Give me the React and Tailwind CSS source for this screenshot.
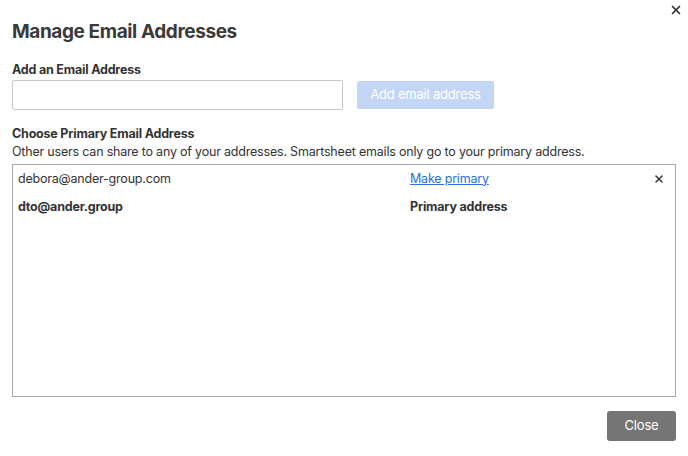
import { X } from "lucide-react";

export default function App() {
  return (
    <div className="relative w-[688px] h-[456px] bg-white px-3 pt-[20px] text-[#333] font-['Inter',sans-serif] tracking-[-0.2px]">
      {/* Close icon */}
      <button className="absolute top-[3px] right-[5px] text-[#333]">
        <X className="h-3.5 w-3.5" strokeWidth={3} />
      </button>

      <h1 className="text-[19px] leading-6 font-bold tracking-[-0.4px] text-[#3a3a3a]">Manage Email Addresses</h1>

      {/* Add address */}
      <div className="mt-[18px] text-[12.5px] leading-4 font-bold">Add an Email Address</div>
      <div className="mt-[2px] flex items-center gap-[14px]">
        <input className="h-[30px] w-[331px] rounded-[2px] border border-[#c8c8c8] px-2 text-sm outline-none" />
        <button className="h-[28px] w-[137px] rounded-[2px] bg-[#c3d6f6] text-[13px] text-white">
          Add email address
        </button>
      </div>

      {/* Primary address */}
      <div className="mt-4 text-[12.5px] leading-4 font-bold">Choose Primary Email Address</div>
      <p className="mt-[1px] text-[12.5px] leading-[18px] text-[#333]">
        Other users can share to any of your addresses. Smartsheet emails only go to your primary address.
      </p>
      <div className="mt-[3px] h-[233px] border border-[#a9a9a9] pt-[2px] flex flex-col gap-1 text-[12.5px]">
        <div className="flex h-6 items-center pl-[5px] pr-[10px]">
          <span className="w-[392px]">debora@ander-group.com</span>
          <a href="#" className="text-[#2a6fdb] underline">Make primary</a>
          <button className="ml-auto text-[#333]">
            <X className="h-3 w-3" strokeWidth={3} />
          </button>
        </div>
        <div className="flex h-6 items-center pl-[5px] pr-[10px] font-bold">
          <span className="w-[392px]">dto@ander.group</span>
          <span>Primary address</span>
        </div>
      </div>

      <div className="mt-[14px] flex justify-end">
        <button className="h-[30px] w-[69px] rounded-[3px] bg-[#757575] text-[13px] text-white">Close</button>
      </div>
    </div>
  );
}
